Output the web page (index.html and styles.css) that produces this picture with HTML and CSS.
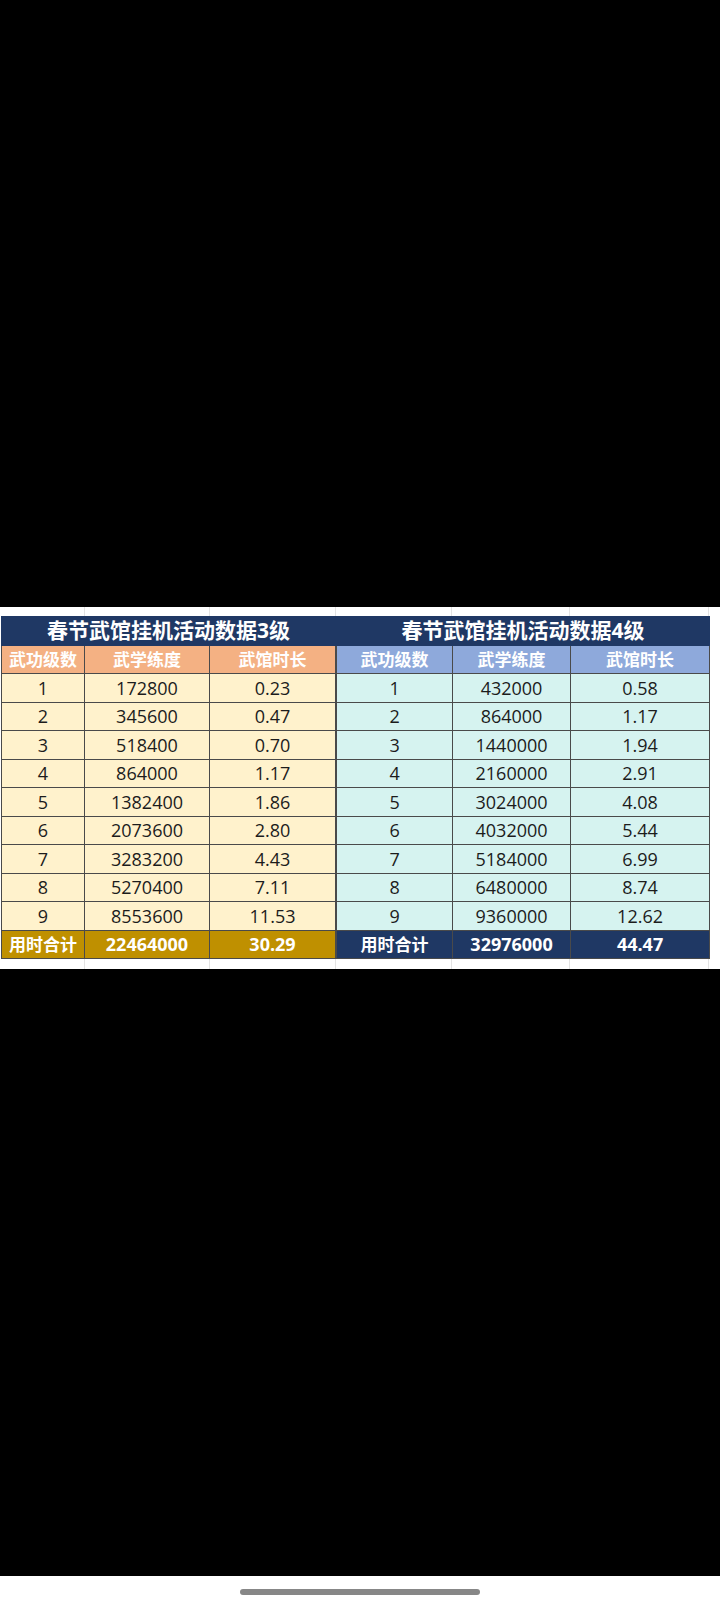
FILE: index.html
```html
<!DOCTYPE html>
<html lang="zh">
<head>
<meta charset="utf-8">
<title>春节武馆挂机活动数据</title>
<link rel="stylesheet" href="styles.css">
</head>
<body>
<div class="blank"></div>
<div class="sheet">
  <div class="strip strip-top">
    <span class="g g1"></span><span class="g g2"></span><span class="g g3"></span><span class="g g4"></span><span class="g g5"></span><span class="g g6"></span><span class="g g7"></span>
  </div>
  <div class="tables">
    <table class="t t3">
      <colgroup><col class="c1"><col class="c2"><col class="c3"></colgroup>
      <tr class="title"><th colspan="3">春节武馆挂机活动数据3级</th></tr>
      <tr class="head"><th>武功级数</th><th>武学练度</th><th>武馆时长</th></tr>
      <tr><td>1</td><td>172800</td><td>0.23</td></tr>
      <tr><td>2</td><td>345600</td><td>0.47</td></tr>
      <tr><td>3</td><td>518400</td><td>0.70</td></tr>
      <tr><td>4</td><td>864000</td><td>1.17</td></tr>
      <tr><td>5</td><td>1382400</td><td>1.86</td></tr>
      <tr><td>6</td><td>2073600</td><td>2.80</td></tr>
      <tr><td>7</td><td>3283200</td><td>4.43</td></tr>
      <tr><td>8</td><td>5270400</td><td>7.11</td></tr>
      <tr><td>9</td><td>8553600</td><td>11.53</td></tr>
      <tr class="total"><th>用时合计</th><th>22464000</th><th>30.29</th></tr>
    </table>
    <table class="t t4">
      <colgroup><col class="c4"><col class="c5"><col class="c6"></colgroup>
      <tr class="title"><th colspan="3">春节武馆挂机活动数据4级</th></tr>
      <tr class="head"><th>武功级数</th><th>武学练度</th><th>武馆时长</th></tr>
      <tr><td>1</td><td>432000</td><td>0.58</td></tr>
      <tr><td>2</td><td>864000</td><td>1.17</td></tr>
      <tr><td>3</td><td>1440000</td><td>1.94</td></tr>
      <tr><td>4</td><td>2160000</td><td>2.91</td></tr>
      <tr><td>5</td><td>3024000</td><td>4.08</td></tr>
      <tr><td>6</td><td>4032000</td><td>5.44</td></tr>
      <tr><td>7</td><td>5184000</td><td>6.99</td></tr>
      <tr><td>8</td><td>6480000</td><td>8.74</td></tr>
      <tr><td>9</td><td>9360000</td><td>12.62</td></tr>
      <tr class="total"><th>用时合计</th><th>32976000</th><th>44.47</th></tr>
    </table>
    <div class="filler"></div>
  </div>
  <div class="strip strip-bottom">
    <span class="g g1"></span><span class="g g2"></span><span class="g g3"></span><span class="g g4"></span><span class="g g5"></span><span class="g g6"></span><span class="g g7"></span>
  </div>
</div>
<div class="blank blank-lower"></div>
<div class="nav"><div class="pill"></div></div>
</body>
</html>
```
FILE: styles.css
```css
html, body {
  margin: 0;
  padding: 0;
  background: #000;
}
body {
  width: 720px;
  height: 1608px;
  overflow: hidden;
  font-family: "Open Sans", "Noto Sans CJK SC", sans-serif;
}
.blank {
  height: 607px;
  background: #000;
}
.blank-lower {
  height: 607px;
}
.sheet {
  background: #fff;
  height: 362px;
  display: flex;
  flex-direction: column;
}
.strip {
  display: flex;
  padding-left: 1px;
}
.strip-top { height: 9.5px; }
.strip-bottom { height: 10.5px; }
.g {
  border-right: 1px solid #e3e3e3;
  box-sizing: border-box;
}
.g1 { width: 84px; }
.g2 { width: 125px; }
.g3 { width: 126px; }
.g4 { width: 116px; }
.g5 { width: 118px; }
.g6 { width: 139px; }
.g7 { flex: 1; border-right: none; }
.tables {
  display: flex;
  padding-left: 1px;
}
.t {
  border-collapse: collapse;
  table-layout: fixed;
  border: 1px solid #3a3a3a;
}
.t3 { width: 334px; }
.t4 { width: 373px; border-left: none; }
.c1 { width: 83px; }
.c2 { width: 125px; }
.c3 { width: 126px; }
.c4 { width: 116px; }
.c5 { width: 118px; }
.c6 { width: 139px; }
.t th, .t td {
  height: 28.5px;
  padding: 0;
  text-align: center;
  vertical-align: middle;
  border: 1px solid #4a4a4a;
  box-sizing: border-box;
  white-space: nowrap;
  line-height: 1;
}
.t td {
  font-size: 18px;
  color: #1c1c1c;
  font-weight: 400;
}
.t .title th {
  background: #1f3864;
  color: #fff;
  font-size: 21px;
  font-weight: 700;
  border-color: #1f3864;
}
.t .head th {
  color: #fff;
  font-size: 17px;
  font-weight: 700;
}
.t3 .head th { background: #f4b183; }
.t4 .head th { background: #8ea9db; }
.t3 td { background: #fff2cc; }
.t4 td { background: #d6f3f0; }
.t .total th {
  color: #fff;
  font-size: 18px;
  font-weight: 700;
}
.t .total th:first-child { font-size: 17px; }
.t3 .total th { background: #bf9000; }
.t4 .total th { background: #1f3864; }
.filler {
  flex: 1;
  display: flex;
  flex-direction: column;
}
.nav {
  height: 32px;
  background: #fff;
  display: flex;
  justify-content: center;
  align-items: center;
}
.pill {
  width: 240px;
  height: 6px;
  border-radius: 3px;
  background: #878787;
}
```
